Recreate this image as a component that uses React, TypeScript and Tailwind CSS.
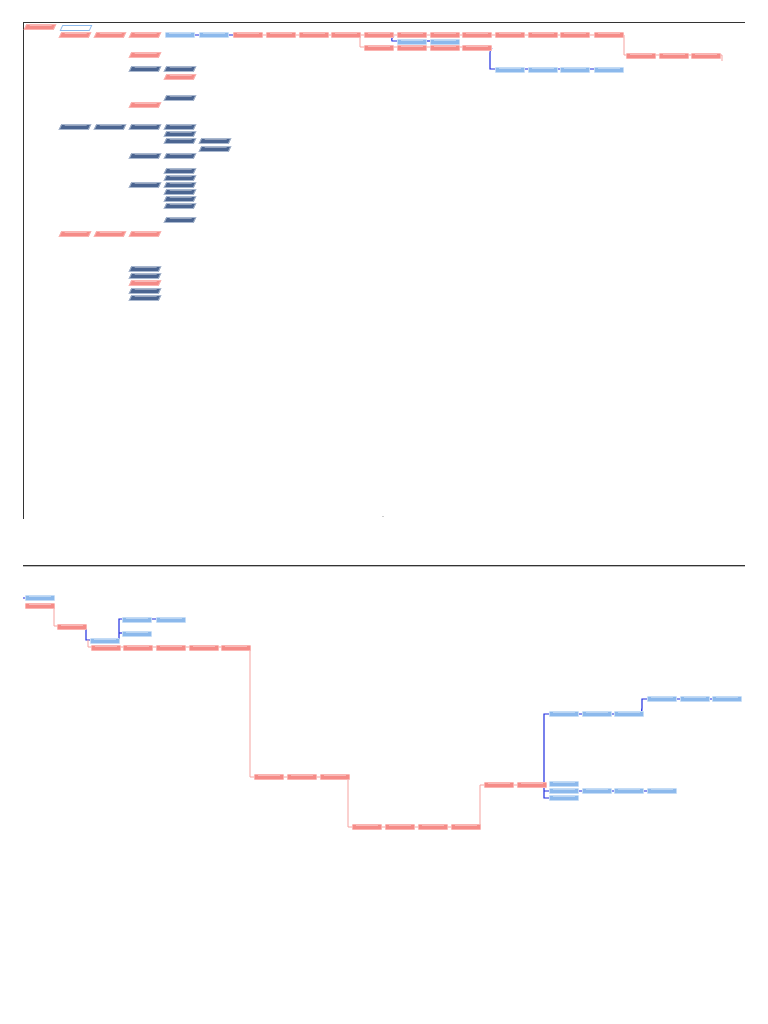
import React from 'react'

type Kind = 'red' | 'blue' | 'navy' | 'outline'
type Node = { x: number; y: number; k: Kind; slant?: boolean; w?: number }

const fill: Record<Kind, string> = {
  red: 'bg-[#f58b87] border-[#fbb4b1]',
  blue: 'bg-[#8cb9ec] border-[#c4dcf6]',
  navy: 'bg-[#4b6591] border-[#a9b8cf]',
  outline: 'bg-white border-[#8cb9ec]',
}

const row = (xs: number[], y: number, k: Kind, slant = false): Node[] =>
  xs.map(x => ({ x, y, k, slant }))

const topNodes: Node[] = [
  { x: 25, y: 24, k: 'red', slant: true },
  { x: 61, y: 25, k: 'outline', slant: true },
  ...row([60, 95, 130], 32, 'red', true),
  ...row([165, 199], 32, 'blue'),
  ...row([233, 266, 299, 331, 364, 397, 430, 462, 495, 528, 560, 594], 32, 'red'),
  ...row([626, 659, 691], 53, 'red'),
  ...row([364, 397, 430, 462], 45, 'red'),
  ...row([397, 430], 39, 'blue'),
  ...row([495, 528, 560, 594], 67, 'blue'),
  { x: 130, y: 52, k: 'red', slant: true },
  { x: 130, y: 66, k: 'navy', slant: true },
  { x: 165, y: 66, k: 'navy', slant: true },
  { x: 165, y: 74, k: 'red', slant: true },
  { x: 165, y: 95, k: 'navy', slant: true },
  { x: 130, y: 102, k: 'red', slant: true },
  ...row([60, 95, 130, 165], 124, 'navy', true),
  ...row([165], 131, 'navy', true),
  ...row([165, 200], 138, 'navy', true),
  ...row([200], 146, 'navy', true),
  ...row([130, 165], 153, 'navy', true),
  ...row([165], 168, 'navy', true),
  ...row([165], 175, 'navy', true),
  ...row([130, 165], 182, 'navy', true),
  ...row([165], 189, 'navy', true),
  ...row([165], 196, 'navy', true),
  ...row([165], 203, 'navy', true),
  ...row([165], 217, 'navy', true),
  ...row([60, 95, 130], 231, 'red', true),
  ...row([130], 266, 'navy', true),
  ...row([130], 273, 'navy', true),
  ...row([130], 280, 'red', true),
  ...row([130], 288, 'navy', true),
  ...row([130], 295, 'navy', true),
]

const bottomNodes: Node[] = [
  { x: 25, y: 595, k: 'blue' },
  { x: 25, y: 603, k: 'red' },
  { x: 57, y: 624, k: 'red' },
  { x: 90, y: 638, k: 'blue' },
  ...row([91, 123, 156, 189, 221], 645, 'red'),
  ...row([122, 156], 617, 'blue'),
  { x: 122, y: 631, k: 'blue' },
  ...row([254, 287, 320], 774, 'red'),
  ...row([352, 385, 418, 451], 824, 'red'),
  ...row([484, 517], 782, 'red'),
  ...row([549, 582, 614], 711, 'blue'),
  ...row([647, 680, 712], 696, 'blue'),
  { x: 549, y: 781, k: 'blue' },
  ...row([549, 582, 614], 788, 'blue'),
  { x: 647, y: 788, k: 'blue', w: 30 },
  { x: 549, y: 795, k: 'blue' },
]

// connector paths [d, colour]
const links: [string, string][] = [
  ['M195 35 H233', '#1f2de0'],
  ['M233 35 H624', '#f6a3a0'],
  ['M360 35 V47 H364', '#f6a3a0'],
  ['M394 36 Q391 38 392 41 H397', '#1f2de0'],
  ['M427 41 H430', '#1f2de0'],
  ['M364 47 H492', '#f6a3a0'],
  ['M492 48 Q490 50 490 53 V69 H495', '#1f2de0'],
  ['M525 69 H594', '#1f2de0'],
  ['M624 35 V55 H722 V61', '#f6a3a0'],
  ['M23 598 H25', '#1f2de0'],
  ['M54 606 V626 H57', '#f6a3a0'],
  ['M86 627 V640 H90', '#1f2de0'],
  ['M88 640 V647 H250', '#f6a3a0'],
  ['M119 641 V619 H186', '#1f2de0'],
  ['M119 633 H122', '#1f2de0'],
  ['M250 648 V777 H348', '#f6a3a0'],
  ['M348 777 V827 H480', '#f6a3a0'],
  ['M480 827 V785 H545', '#f6a3a0'],
  ['M544 785 V714 H643', '#1f2de0'],
  ['M643 714 Q641 712 642 708 V699 H742', '#1f2de0'],
  ['M544 785 V798 H549', '#1f2de0'],
  ['M544 791 H677', '#1f2de0'],
]

function Box({ n }: { n: Node }) {
  return (
    <div
      className={`absolute border ${fill[n.k]} ${n.slant ? 'h-[6px] -skew-x-[25deg]' : 'h-[6px] rounded-[1px]'}`}
      style={{ left: n.x, top: n.y, width: n.w ?? 30 }}
    >
      <div className="mx-[3px] h-[1px] bg-white/40" />
    </div>
  )
}

export default function App() {
  return (
    <div className="relative w-[768px] h-[1024px] bg-white overflow-hidden font-['Liberation_Sans',sans-serif]">
      <div className="pt-[22px] pl-[23px]">
        <div className="w-[722px] h-[497px] border-l border-t border-[#333]" />
        <div className="mt-[46px] w-[722px] border-t border-[#333] shadow-[0_1px_0_#bbb]" />
      </div>
      <div className="absolute left-[382px] top-[516px] h-[1px] w-[2px] bg-[#ccc]" />

      <svg className="absolute inset-0" width="768" height="1024" fill="none">
        {links.map(([d, c], i) => (
          <path key={i} d={d} stroke={c} strokeWidth={c === '#1f2de0' ? 1.2 : 1} />
        ))}
      </svg>

      {[...topNodes, ...bottomNodes].map((n, i) => (
        <Box key={i} n={n} />
      ))}
    </div>
  )
}
